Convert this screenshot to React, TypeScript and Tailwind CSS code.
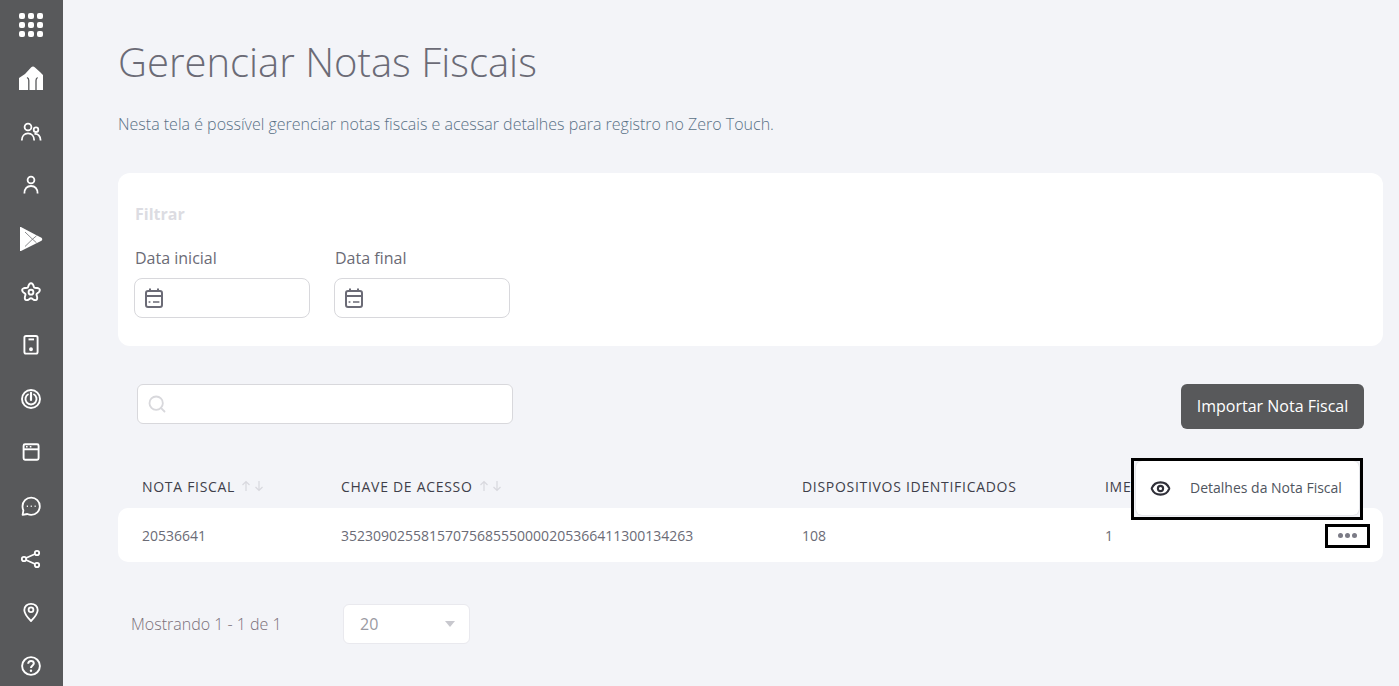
import React from "react";
import { Eye, Search } from "lucide-react";

const ICON = "w-[24px] h-[24px] text-white";

const GridIcon = () => (
	<svg viewBox="0 0 24 24" className={ICON} fill="currentColor">
		{[0, 9, 18].flatMap((y) =>
			[0, 9, 18].map((x) => <rect key={`${x}-${y}`} x={x} y={y} width="6" height="6" rx="2" />)
		)}
	</svg>
);

const HomeIcon = () => (
	<svg viewBox="0 0 24 24" className={ICON}>
		<path d="M0 12 L6 8 L12 1.5 Q14 -0.5 16 1.5 L21 6 L24 9 L24 24 L0 24 Z" fill="currentColor" />
		<path d="M8 11.5 C9.2 12 9.8 13 9.8 14.5 V24 M18.6 11.5 C17.6 12 17 13 17 14.5 V24" fill="none" stroke="#58595b" strokeWidth="1.3" />
	</svg>
);

const UsersIcon = () => (
	<svg viewBox="0 0 24 24" className={ICON} fill="none" stroke="currentColor" strokeWidth="1.8">
		<circle cx="9" cy="7" r="3.4" />
		<circle cx="17" cy="9.7" r="2.3" />
		<path d="M2.8 20.5 C2.8 16 5.5 13.4 9 13.4 C12.5 13.4 15.2 16 15.2 20.5" />
		<path d="M15.5 14 C19 13.5 21.6 16 21.6 20.5" />
	</svg>
);

const UserIcon = () => (
	<svg viewBox="0 0 24 24" className={ICON} fill="none" stroke="currentColor" strokeWidth="1.8">
		<circle cx="12" cy="7" r="3.4" />
		<path d="M5.4 20.4 C5.4 15.8 8 13 12 13 C16 13 18.6 15.8 18.6 20.4" />
	</svg>
);

const PlayIcon = () => (
	<svg viewBox="0 0 24 24" className={ICON}>
		<path d="M1 -0.5 L18 8.5 L22.5 10.8 Q24 12.2 22.5 13.7 L18 16 L1 24.5 Z" fill="currentColor" />
		<path d="M6 5 L13.5 12.2 L6 19.5 M13.5 12.2 L17.5 8.8 M13.5 12.2 L17.5 15.8" fill="none" stroke="#58595b" strokeWidth="0.7" />
	</svg>
);

// five rounded lobes
const cogPath = Array.from({ length: 60 }, (_, i) => {
	const a = (i / 60) * Math.PI * 2;
	const r = 7.5 + 1.7 * Math.cos(5 * a);
	return `${i === 0 ? "M" : "L"}${(12 + r * Math.sin(a)).toFixed(2)} ${(12.4 - r * Math.cos(a)).toFixed(2)}`;
}).join(" ") + " Z";

const CogIcon = () => (
	<svg viewBox="0 0 24 24" className={ICON} fill="none" stroke="currentColor" strokeWidth="1.9" strokeLinejoin="round">
		<path d={cogPath} />
		<circle cx="12" cy="12.2" r="2.4" />
	</svg>
);

const TabletIcon = () => (
	<svg viewBox="0 0 24 24" className={ICON} fill="none" stroke="currentColor" strokeWidth="1.9">
		<rect x="5.4" y="3" width="13.2" height="17.6" rx="1.6" />
		<path d="M9.5 6.4 H15" />
		<circle cx="12" cy="16.2" r="1" fill="currentColor" />
	</svg>
);

const RadarIcon = () => (
	<svg viewBox="0 0 24 24" className={ICON} fill="none" stroke="currentColor" strokeWidth="1.9">
		<circle cx="12" cy="12" r="9" />
		<path d="M9.6 7 A5.55 5.55 0 1 0 14.4 7" />
		<path d="M12 5.8 V13" strokeWidth="2.2" strokeLinecap="round" />
	</svg>
);

const BrowserIcon = () => (
	<svg viewBox="0 0 24 24" className={ICON} fill="none" stroke="currentColor" strokeWidth="1.9">
		<rect x="4.6" y="4.3" width="15" height="15.4" rx="1.4" />
		<path d="M4.6 9.3 H19.6" />
		<path d="M7 6.8 H8.6 M10.8 6.8 H12.4" strokeWidth="1.5" />
	</svg>
);

const ChatIcon = () => (
	<svg viewBox="0 0 24 24" className={ICON} fill="none" stroke="currentColor" strokeWidth="1.8" strokeLinejoin="round">
		<path d="M3.6 20.9 L4.4 16.4 C3.8 15.1 3.5 13.8 3.5 12.3 C3.5 7.4 7.3 3.6 12.2 3.6 C17 3.6 20.8 7.4 20.8 12.2 C20.8 17 17 20.8 12.2 20.8 C10.8 20.8 9.5 20.5 8.3 20 Z" />
		<path d="M7.8 12.2 H8.9 M11.7 12.2 H12.8 M15.6 12.2 H16.7" strokeWidth="1.6" />
	</svg>
);

const ShareIcon = () => (
	<svg viewBox="0 0 24 24" className={ICON} fill="none" stroke="currentColor" strokeWidth="1.8">
		<circle cx="5" cy="12" r="2.2" />
		<circle cx="18" cy="6" r="2.2" />
		<circle cx="18" cy="18" r="2.2" />
		<path d="M7 11 L16 7 M7 13 L16 17" />
	</svg>
);

const PinIcon = () => (
	<svg viewBox="0 0 24 24" className={ICON} fill="none" stroke="currentColor" strokeWidth="1.8" strokeLinejoin="round">
		<path d="M12 21 C8 17 5.3 14 5.3 10 C5.3 6.3 8.3 3.8 12 3.8 C15.7 3.8 18.7 6.3 18.7 10 C18.7 14 16 17 12 21 Z" />
		<circle cx="12" cy="9.7" r="2.4" />
	</svg>
);

const HelpIcon = () => (
	<svg viewBox="0 0 24 24" className={ICON} fill="none" stroke="currentColor" strokeWidth="1.9">
		<circle cx="12" cy="12" r="8.9" />
		<path d="M9.2 9.8 C9.2 8.1 10.4 7.1 12 7.1 C13.6 7.1 14.8 8.1 14.8 9.5 C14.8 11.4 12 11.6 12 14" strokeWidth="2" />
		<circle cx="12" cy="16.8" r="1.2" fill="currentColor" stroke="none" />
	</svg>
);

const CalendarIcon = () => (
	<svg viewBox="0 0 20 20" className="w-[20px] h-[20px] text-[#6b6b76]" fill="none" stroke="currentColor" strokeWidth="2">
		<rect x="2" y="3" width="16" height="16" rx="2" />
		<path d="M2 8 H18" />
		<path d="M6 0.5 V4 M14 0.5 V4" />
		<path d="M4.6 14 H6.4 M9 14 H15.4" strokeWidth="1.6" />
	</svg>
);

const SortArrows = () => (
	<span className="flex items-center gap-[3px] ml-[6px] text-[#d8d8de]">
		<svg viewBox="0 0 10 12" className="w-[10px] h-[12px]" fill="none" stroke="currentColor" strokeWidth="1.2">
			<path d="M5 11 V1.5 M1.5 5 L5 1.5 L8.5 5" />
		</svg>
		<svg viewBox="0 0 10 12" className="w-[10px] h-[12px]" fill="none" stroke="currentColor" strokeWidth="1.2">
			<path d="M5 1 V10.5 M1.5 7 L5 10.5 L8.5 7" />
		</svg>
	</span>
);

const DateField = ({ label }: { label: string }) => (
	<div className="w-[176px]">
		<div className="text-[16px] leading-[22px] text-[#6b6b76] mb-[9px] ml-px">{label}</div>
		<div className="h-[40px] bg-white border border-[#d8d8dc] rounded-[8px] flex items-center pl-[9px]">
			<CalendarIcon />
		</div>
	</div>
);

const App: React.FC = () => {
	const icons = [
		GridIcon, HomeIcon, UsersIcon, UserIcon, PlayIcon, CogIcon, TabletIcon,
		RadarIcon, BrowserIcon, ChatIcon, ShareIcon, PinIcon, HelpIcon,
	];

	return (
		<div className="flex h-[686px] w-[1399px] overflow-hidden bg-[#f3f4f8] font-['Open_Sans',sans-serif]">
			<aside className="w-[63px] shrink-0 h-full bg-[#58595b] flex flex-col items-center pt-[13px] pr-px gap-[29.4px]">
				{icons.map((Icon, i) => (
					<Icon key={i} />
				))}
			</aside>

			<main className="relative flex-1 pl-[55px] pr-[16px]">
				<h1 className="mt-[35px] text-[40px] leading-[54px] font-light text-[#6b6b76]">Gerenciar Notas Fiscais</h1>
				<p className="mt-[24px] text-[16px] leading-[22px] font-light text-[#5a7186]">
					Nesta tela é possível gerenciar notas fiscais e acessar detalhes para registro no Zero Touch.
				</p>

				<section className="mt-[38px] h-[173px] bg-white rounded-[12px] px-[16px] pt-[31px]">
					<div className="text-[16px] leading-[20px] font-bold text-[#dcdce2] ml-px">Filtrar</div>
					<div className="flex gap-[24px] mt-[23px]">
						<DateField label="Data inicial" />
						<DateField label="Data final" />
					</div>
				</section>

				<div className="mt-[38px] flex items-start justify-between pl-[19px] pr-[19px]">
					<div className="w-[376px] h-[40px] bg-white border border-[#d8d8dc] rounded-[6px] flex items-center pl-[9px]">
						<Search className="w-[20px] h-[20px] text-[#d8d8dc]" strokeWidth={2.2} />
					</div>
					<button className="w-[183px] h-[45px] bg-[#58595b] rounded-[6px] text-[16px] leading-[45px] font-medium text-white">
						Importar Nota Fiscal
					</button>
				</div>

				<div className="mt-[42px] flex h-[30px] items-center text-[14px] tracking-[0.7px] text-[#3f3f4a]">
					<div className="w-[199px] pl-[24px] flex items-center">NOTA FISCAL<SortArrows /></div>
					<div className="w-[482px] pl-[24px] flex items-center">CHAVE DE ACESSO<SortArrows /></div>
					<div className="w-[303px] pl-[3px]">DISPOSITIVOS IDENTIFICADOS</div>
					<div className="pl-[3px]">IMEI</div>
				</div>

				<div className="mt-[7px] h-[54px] bg-white rounded-[10px] flex items-center text-[14px] text-[#6b6b76]">
					<div className="w-[199px] pl-[24px]">20536641</div>
					<div className="w-[482px] pl-[24px]">35230902558157075685550000205366411300134263</div>
					<div className="w-[303px] pl-[3px]">108</div>
					<div className="pl-[3px]">1</div>
				</div>

				<div className="mt-[42px] flex items-center pl-[13px]">
					<span className="w-[212px] text-[16px] font-light text-[#7a6f78]">Mostrando 1 - 1 de 1</span>
					<div className="w-[127px] h-[40px] bg-white border border-[#e9e9ee] rounded-[6px] flex items-center justify-between pl-[16px] pr-[14px] text-[16px] text-[#9a9aa2]">
						20
						<span className="w-0 h-0 border-x-[5px] border-x-transparent border-t-[6px] border-t-[#c8c8ce]" />
					</div>
				</div>

				{/* dropdown menu + annotation boxes */}
				<div className="absolute left-[1068px] top-[458px] w-[232px] h-[62px] border-[3px] border-black bg-[#f3f4f8] pl-[2px] pr-px pb-[2px]">
					<div className="h-full bg-white rounded-[6px] shadow-[0_0_2px_rgba(0,0,0,0.2)] flex items-center pl-[14px]">
						<Eye className="w-[21px] h-[21px] text-[#2f2f38]" strokeWidth={2.4} />
						<span className="ml-[19px] -mt-px text-[14px] text-[#4f5560]">Detalhes da Nota Fiscal</span>
					</div>
				</div>
				<div className="absolute left-[1262px] top-[524px] w-[45px] h-[24px] border-[3px] border-black pb-px flex items-center justify-center gap-[2px]">
					<span className="w-[5px] h-[5px] rounded-full bg-[#7b7b86]" />
					<span className="w-[5px] h-[5px] rounded-full bg-[#7b7b86]" />
					<span className="w-[5px] h-[5px] rounded-full bg-[#7b7b86]" />
				</div>
			</main>
		</div>
	);
};

export default App;
